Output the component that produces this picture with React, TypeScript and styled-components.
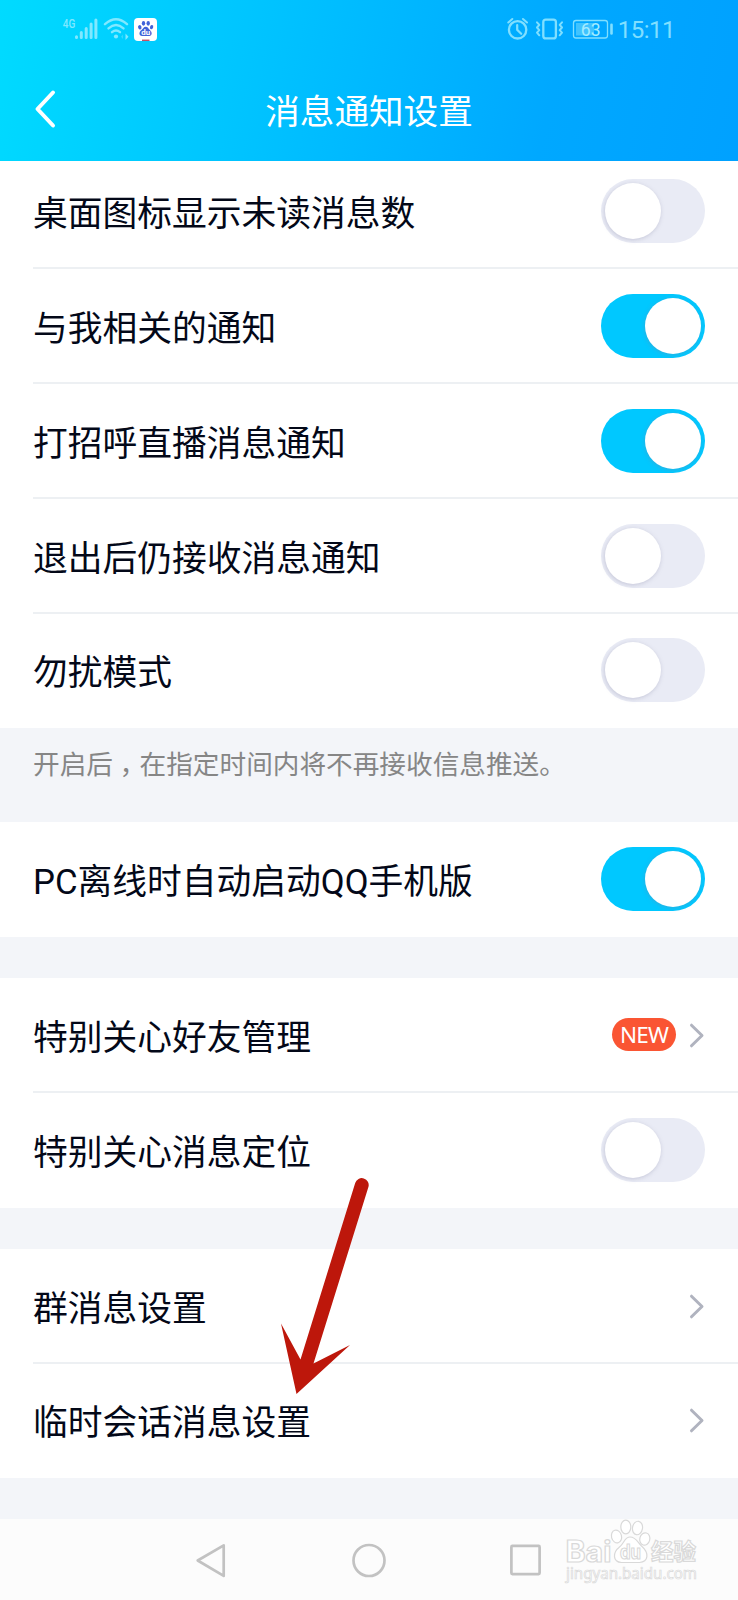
import React from 'react';
import styled, { createGlobalStyle } from 'styled-components';

const GlobalStyle = createGlobalStyle`
  *, *::before, *::after { box-sizing: border-box; }
  body { margin: 0; background: #f3f5f9; }
`;

const Screen = styled.div`
  position: relative;
  width: 738px;
  height: 1600px;
  overflow: hidden;
  display: flex;
  flex-direction: column;
  background: #f3f5f9;
  color: #030818;
  font-family: Roboto, 'Noto Sans CJK SC', sans-serif;
`;

const Header = styled.header`
  flex: none;
  height: 161px;
  color: #fff;
  background: linear-gradient(102deg, #00dbff 0%, #00c4ff 34%, #00a8ff 74%, #00a1ff 100%);
`;

const StatusBar = styled.div`
  height: 58px;
  padding: 0 63px 0 62px;
  display: flex;
  justify-content: space-between;
  color: #80dfff;
`;

const StatusGroup = styled.div`
  display: flex;
  align-items: center;
`;

const Clock = styled.span`
  margin-left: 4px;
  font-size: 24px;
  line-height: 30px;
  letter-spacing: -0.5px;
  padding-top: 2px;
`;

const TitleBar = styled.div`
  height: 103px;
  display: grid;
  grid-template-columns: 90px 1fr 90px;
  align-items: center;
`;

const BackButton = styled.button`
  width: 90px;
  height: 60px;
  padding: 0 0 2px 33px;
  border: 0;
  background: none;
  display: flex;
  align-items: center;
`;

const Title = styled.h1`
  margin: 0;
  padding-top: 4px;
  text-align: center;
  font-size: 34.6px;
  line-height: 50px;
  font-weight: 400;
`;

const Group = styled.section<{ $gap?: number }>`
  flex: none;
  margin-bottom: ${p => p.$gap ?? 0}px;
  background: #fff;
`;

const Row = styled.div<{ $height: number; $last?: boolean }>`
  height: ${p => p.$height}px;
  margin-left: 33px;
  padding-right: 33px;
  padding-bottom: ${p => (p.$last ? 2 : 0)}px;
  border-bottom: ${p => (p.$last ? 0 : 2)}px solid #edf0f3;
  display: flex;
  align-items: center;
  justify-content: space-between;
`;

const FirstRow = styled(Row)`
  padding-bottom: 6px;
`;

const Label = styled.span`
  font-size: 34.75px;
  line-height: 50px;
  padding-top: 6px;
  white-space: nowrap;
`;

const Hint = styled.p`
  flex: none;
  height: 94px;
  margin: 0;
  padding: 17px 33px 0;
  font-size: 26.65px;
  line-height: 40px;
  color: #868686;
  white-space: nowrap;
`;

const Comma = styled.span`
  padding: 0 0.25em;
  font-feature-settings: 'halt';
`;

const Toggle = styled.button<{ $on?: boolean }>`
  width: 104px;
  height: 64px;
  padding: 4px;
  border: 0;
  border-radius: 32px;
  display: flex;
  justify-content: ${p => (p.$on ? 'flex-end' : 'flex-start')};
  background: ${p => (p.$on ? '#00c8ff' : '#e9ebf5')};
`;

const Knob = styled.span`
  width: 56px;
  height: 56px;
  border-radius: 50%;
  background: #fff;
  box-shadow: -0.5px 1px 4px rgba(130, 130, 160, 0.35);
`;

const RowEnd = styled.div`
  display: flex;
  align-items: center;
  gap: 11px;
`;

const Badge = styled.span`
  width: 64px;
  height: 33px;
  border-radius: 17px;
  background: #fa5533;
  color: #fff;
  font-family: 'Noto Sans', sans-serif;
  font-size: 22.5px;
  line-height: 33px;
  text-align: center;
  letter-spacing: -0.8px;
`;

const NavBar = styled.nav`
  flex: none;
  height: 81px;
  display: flex;
  align-items: center;
  padding-left: 195px;
  background: #fcfcfc;
`;

const NavIcon = styled.svg<{ $gap?: number }>`
  flex: none;
  margin-right: ${p => p.$gap ?? 0}px;
  fill: none;
  stroke: #c2c2c2;
  stroke-width: 2.7;
  stroke-linejoin: round;
`;

const Pointer = styled.svg`
  position: absolute;
  left: 276px;
  top: 1174px;
`;

const Watermark = styled.svg`
  position: absolute;
  left: 560px;
  top: 1514px;
`;

const Chevron = () => (
  <svg width="18" height="26" viewBox="0 0 18 26" fill="none" stroke="#b0b3bf" strokeWidth="3" strokeLinecap="round" strokeLinejoin="round">
    <path d="M4.500 3.200l10.500 10.300L4.500 23.800" />
  </svg>
);

const Switch = ({ on }: { on?: boolean }) => (
  <Toggle $on={on} role="switch" aria-checked={!!on}>
    <Knob />
  </Toggle>
);

const SignalIcons = () => (
  <svg width="96" height="30" viewBox="62 14 96 30" fill="none">
    <text x="62.800" y="27.500" fontSize="12.500" fontWeight="500" fontFamily="Roboto, sans-serif" fill="#80e8ff" textLength="12.500" lengthAdjust="spacingAndGlyphs">4G</text>
    <path d="M76.500 36.800v.800M81.300 32.500v5.100M86.200 28.500v9.100M91.100 24v13.600M95.900 20v17.600" stroke="#80e8ff" strokeWidth="3" strokeLinecap="round" />
    <g stroke="#80e8ff" strokeWidth="2.400" strokeLinecap="round">
      <path d="M105 24.200Q116 14.500 127 24.200" />
      <path d="M108.500 28.400Q116 21.800 123.500 28.400" />
      <path d="M112 32.200Q116 28.800 120 32.200" />
    </g>
    <circle cx="116" cy="36.500" r="2.100" fill="#80e8ff" />
    <path d="M125.500 33.500l3 3.300-3 3.300z" fill="#80e8ff" />
    <path d="M123 34.500l-2 2.300 2 2.300z" fill="#80e8ff" opacity=".4" />
    <rect x="134" y="18" width="23" height="23" rx="4" fill="#fff" />
    <g fill="#4162d8">
      <ellipse cx="139.800" cy="27.300" rx="1.700" ry="2.200" transform="rotate(-15 139.800 27.300)" />
      <ellipse cx="143.500" cy="23.300" rx="1.700" ry="2.400" />
      <ellipse cx="148.200" cy="23.300" rx="1.700" ry="2.400" />
      <ellipse cx="151.600" cy="27.100" rx="1.600" ry="2.200" transform="rotate(15 151.600 27.100)" />
      <path d="M145.700 26.800c2.200 0 2.600 1.800 4.200 3.300 2.400 2.200 2.600 5.800-.800 6h-7c-3.400-.200-3.400-4-.600-6 1.700-1.300 2-3.300 4.200-3.300z" />
    </g>
    <text x="145.700" y="35" fontSize="8" fontWeight="700" fontFamily="Roboto, sans-serif" textAnchor="middle" fill="#fff">du</text>
    <path d="M142 40.300h7.500" stroke="#c65165" strokeWidth="1.500" />
  </svg>
);

const AlarmAndBattery = () => (
  <svg width="108" height="30" viewBox="505 14 108 30" fill="none" stroke="#80dfff" strokeLinecap="round">
    <circle cx="516.600" cy="29.800" r="8.700" strokeWidth="2.300" />
    <path d="M516.200 25v4.800l4 4" strokeWidth="2.200" />
    <path d="M507.300 22.500l4-3.500M522 19l4 3.500" strokeWidth="2" />
    <rect x="542.300" y="19.600" width="12.600" height="18.800" rx="2.500" strokeWidth="2.300" />
    <path d="M536 22.300l2.300 2.600-2.300 2.600 2.300 2.600-2.300 2.600 2.300 2.600M561 22.300l-2.300 2.600 2.300 2.600-2.300 2.600 2.300 2.600-2.300 2.600" strokeWidth="2" strokeLinejoin="round" />
    <rect x="572.500" y="20.500" width="34" height="17.500" rx="2.500" strokeWidth="1.300" />
    <rect x="575" y="23" width="18" height="12.500" fill="#80dfff" fillOpacity=".5" stroke="none" />
    <path d="M610.500 24.800v8.600" strokeWidth="2.600" />
    <text x="589.700" y="35.500" fontSize="17.500" fontFamily="Roboto, sans-serif" textAnchor="middle" fill="#a4ecff" stroke="none">63</text>
  </svg>
);

export default function App() {
  return (
    <Screen>
      <GlobalStyle />
      <Header>
        <StatusBar>
          <StatusGroup><SignalIcons /></StatusGroup>
          <StatusGroup>
            <AlarmAndBattery />
            <Clock>15:11</Clock>
          </StatusGroup>
        </StatusBar>
        <TitleBar>
          <BackButton aria-label="返回">
            <svg width="24" height="40" viewBox="0 0 24 40" fill="none" stroke="#fff" strokeWidth="4" strokeLinecap="round" strokeLinejoin="round">
              <path d="M20 3.500L4.500 20l15.500 16.500" />
            </svg>
          </BackButton>
          <Title>消息通知设置</Title>
        </TitleBar>
      </Header>

      <Group>
        <FirstRow $height={108}><Label>桌面图标显示未读消息数</Label><Switch /></FirstRow>
        <Row $height={115}><Label>与我相关的通知</Label><Switch on /></Row>
        <Row $height={115}><Label>打招呼直播消息通知</Label><Switch on /></Row>
        <Row $height={115}><Label>退出后仍接收消息通知</Label><Switch /></Row>
        <Row $height={114} $last><Label>勿扰模式</Label><Switch /></Row>
      </Group>
      <Hint>开启后<Comma>，</Comma>在指定时间内将不再接收信息推送。</Hint>

      <Group $gap={41}>
        <Row $height={115} $last><Label>PC离线时自动启动QQ手机版</Label><Switch on /></Row>
      </Group>

      <Group $gap={41}>
        <Row $height={115}>
          <Label>特别关心好友管理</Label>
          <RowEnd><Badge>NEW</Badge><Chevron /></RowEnd>
        </Row>
        <Row $height={115} $last><Label>特别关心消息定位</Label><Switch /></Row>
      </Group>

      <Group $gap={41}>
        <Row $height={115}><Label>群消息设置</Label><Chevron /></Row>
        <Row $height={114} $last><Label>临时会话消息设置</Label><Chevron /></Row>
      </Group>

      <NavBar>
        <NavIcon $gap={124} width="32" height="36" viewBox="195 1541 32 36">
          <path d="M223.700 1544.300v30.600l-26-15.400z" />
        </NavIcon>
        <NavIcon $gap={122} width="36" height="36" viewBox="351 1541 36 36">
          <circle cx="369" cy="1559.500" r="15.500" />
        </NavIcon>
        <NavIcon width="34" height="34" viewBox="509 1542.500 34 34">
          <rect x="511.400" y="1545.400" width="28.200" height="28.200" rx="1" />
        </NavIcon>
      </NavBar>

      <Pointer width="94" height="224" viewBox="276 1174 94 224">
        <path d="M355.200 1183A6.800 6.800 0 0 1 368.400 1187L313.500 1363.500L350 1345L296.500 1394L281 1323.500L300.500 1359.500Z" fill="#bd170b" />
      </Pointer>

      <Watermark width="150" height="76" viewBox="560 1514 150 76" fill="#fff" stroke="#d9d9d9" strokeWidth="1.200">
        <text x="565.500" y="1561.500" fontSize="29.500" fontWeight="700" fontFamily="Inter, sans-serif" textLength="46" lengthAdjust="spacingAndGlyphs">Bai</text>
        <ellipse cx="616.500" cy="1536.500" rx="5" ry="6.500" transform="rotate(-15 616.500 1536.500)" />
        <ellipse cx="625.800" cy="1527" rx="5" ry="6.800" />
        <ellipse cx="637.500" cy="1528" rx="5" ry="6.800" transform="rotate(10 637.500 1528)" />
        <ellipse cx="644.800" cy="1539" rx="5" ry="6.200" transform="rotate(15 644.800 1539)" />
        <path d="M630 1537c6 0 7.500 5 11.500 9 8 7 7 16-2 16.500h-18c-9-.500-9-10-2-15.500 5-4 5-10 10.500-10z" />
        <text x="630.500" y="1559" fontSize="20" fontWeight="700" fontFamily="Inter, sans-serif" textAnchor="middle" textLength="21" lengthAdjust="spacingAndGlyphs">du</text>
        <text x="651" y="1560" fontSize="23" fontWeight="700" fontFamily="'Noto Sans CJK SC', sans-serif" textLength="45" lengthAdjust="spacingAndGlyphs">经验</text>
        <text x="566" y="1579" fontSize="15.500" fontFamily="'Noto Sans', sans-serif" strokeWidth=".7" textLength="131" lengthAdjust="spacingAndGlyphs">jingyan.baidu.com</text>
      </Watermark>
    </Screen>
  );
}
